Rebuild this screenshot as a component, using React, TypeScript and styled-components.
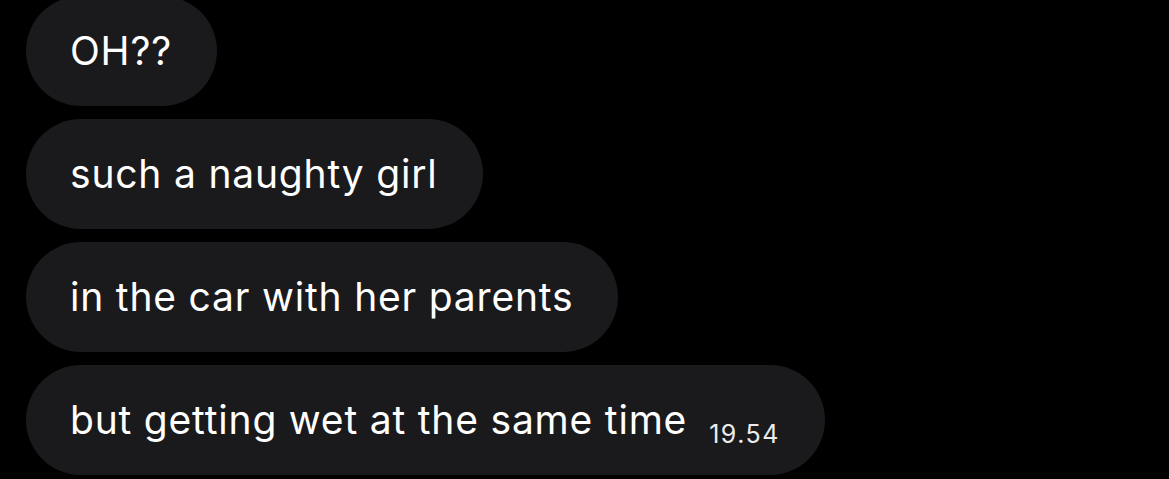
import styled, { createGlobalStyle } from "styled-components";

const GlobalStyle = createGlobalStyle`
  html, body {
    margin: 0;
    padding: 0;
    background: #000;
  }
  body {
    font-family: Inter, "Liberation Sans", Arial, sans-serif;
    -webkit-font-smoothing: antialiased;
  }
`;

const messages = [
  { text: "OH??" },
  { text: "such a naughty girl" },
  { text: "in the car with her parents" },
  { text: "but getting wet at the same time", time: "19.54" },
];

const App = () => {
  return (
    <>
      <GlobalStyle />
      <Thread>
        {messages.map((m) => (
          <Bubble key={m.text}>
            <Text>{m.text}</Text>
            {m.time && <Time>{m.time}</Time>}
          </Bubble>
        ))}
      </Thread>
    </>
  );
};

const Thread = styled.div`
  width: 1169px;
  height: 479px;
  overflow: hidden;
  display: flex;
  flex-direction: column;
  align-items: flex-start;
  gap: 13px;
  padding-left: 26px;
  box-sizing: border-box;
`;

const Bubble = styled.div`
  &:first-child {
    margin-top: -4px;
  }
  height: 110px;
  flex-shrink: 0;
  box-sizing: border-box;
  border-radius: 55px;
  background: #1a1a1c;
  padding: 0 45px 0 44px;
  display: flex;
  align-items: baseline;
  align-content: center;
  flex-wrap: wrap;
  gap: 22px;
`;

const Text = styled.span`
  color: #fff;
  font-size: 39px;
  line-height: 110px;
  letter-spacing: 0.8px;
`;

const Time = styled.span`
  color: #ececec;
  font-size: 25px;
  letter-spacing: 1.5px;
  position: relative;
  top: 9px;
`;

export default App;
